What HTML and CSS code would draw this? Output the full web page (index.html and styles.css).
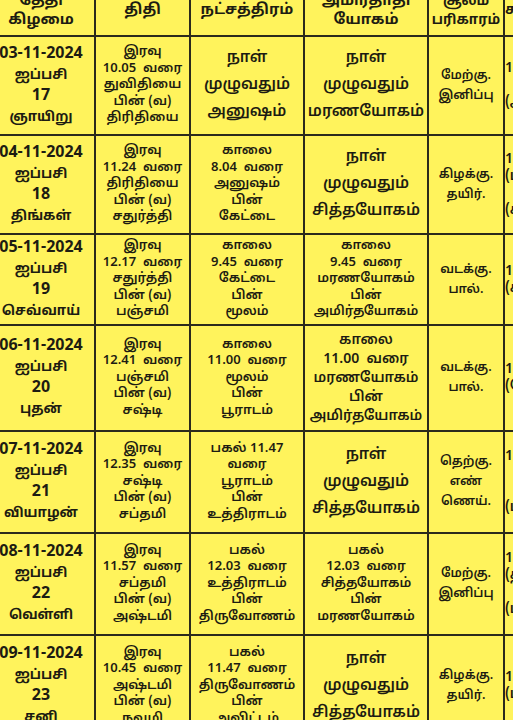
FILE: index.html
```html
<!DOCTYPE html>
<html lang="ta">
<head>
<meta charset="utf-8">
<title>பஞ்சாங்கம்</title>
<link rel="stylesheet" href="styles.css">
</head>
<body>
<div class="page">
<table class="cal">
<colgroup>
<col class="c1"><col class="c2"><col class="c3"><col class="c4"><col class="c5"><col class="c6">
</colgroup>
<thead>
<tr class="head">
<th>தேதி<br>கிழமை</th>
<th>திதி</th>
<th>நட்சத்திரம்</th>
<th>அமிர்தாதி<br>யோகம்</th>
<th class="hs">சூலம்<br>பரிகாரம்</th>
<th class="last">சந்திராஷ்டமம்</th>
</tr>
</thead>
<tbody>
<tr class="r1">
<td class="date">03-11-2024<br><span class="tm">ஐப்பசி</span><br>17<br><span class="tm">ஞாயிறு</span></td>
<td class="tt">இரவு<br>10.05&nbsp; வரை<br>துவிதியை<br>பின் (வ)<br>திரிதியை</td>
<td class="big">நாள்<br>முழுவதும்<br>அனுஷம்</td>
<td class="big">நாள்<br>முழுவதும்<br>மரணயோகம்</td>
<td class="sm">மேற்கு.<br>இனிப்பு</td>
<td class="last">10.06 வரை<br><br>(அஸ்வினி)</td>
</tr>
<tr class="r2">
<td class="date">04-11-2024<br><span class="tm">ஐப்பசி</span><br>18<br><span class="tm">திங்கள்</span></td>
<td class="tt">இரவு<br>11.24&nbsp; வரை<br>திரிதியை<br>பின் (வ)<br>சதுர்த்தி</td>
<td class="tt">காலை<br>8.04&nbsp; வரை<br>அனுஷம்<br>பின்<br>கேட்டை</td>
<td class="big">நாள்<br>முழுவதும்<br>சித்தயோகம்</td>
<td class="sm">கிழக்கு.<br>தயிர்.</td>
<td class="last">1.04 வரை<br>(பரணி)<br><br>(கிருத்திகை)</td>
</tr>
<tr class="r3">
<td class="date">05-11-2024<br><span class="tm">ஐப்பசி</span><br>19<br><span class="tm">செவ்வாய்</span></td>
<td class="tt">இரவு<br>12.17&nbsp; வரை<br>சதுர்த்தி<br>பின் (வ)<br>பஞ்சமி</td>
<td class="tt">காலை<br>9.45&nbsp; வரை<br>கேட்டை<br>பின்<br>மூலம்</td>
<td class="tt">காலை<br>9.45&nbsp; வரை<br>மரணயோகம்<br>பின்<br>அமிர்தயோகம்</td>
<td class="sm">வடக்கு.<br>பால்.</td>
<td class="last">12.10<br>(கிருத்திகை)</td>
</tr>
<tr class="r4">
<td class="date">06-11-2024<br><span class="tm">ஐப்பசி</span><br>20<br><span class="tm">புதன்</span></td>
<td class="tt">இரவு<br>12.41&nbsp; வரை<br>பஞ்சமி<br>பின் (வ)<br>சஷ்டி</td>
<td class="tt">காலை<br>11.00&nbsp; வரை<br>மூலம்<br>பின்<br>பூராடம்</td>
<td class="mid">காலை<br>11.00&nbsp; வரை<br>மரணயோகம்<br>பின்<br>அமிர்தயோகம்</td>
<td class="sm">வடக்கு.<br>பால்.</td>
<td class="last">1.10 வரை<br>(ரோகிணி)</td>
</tr>
<tr class="r5">
<td class="date">07-11-2024<br><span class="tm">ஐப்பசி</span><br>21<br><span class="tm">வியாழன்</span></td>
<td class="tt">இரவு<br>12.35&nbsp; வரை<br>சஷ்டி<br>பின் (வ)<br>சப்தமி</td>
<td class="tt">பகல் 11.47<br>வரை<br>பூராடம்<br>பின்<br>உத்திராடம்</td>
<td class="big">நாள்<br>முழுவதும்<br>சித்தயோகம்</td>
<td class="sm">தெற்கு.<br>எண்<br>ணெய்.</td>
<td class="last">12.03 வரை<br><br><br>(மிருகசீரிடம்)</td>
</tr>
<tr class="r6">
<td class="date">08-11-2024<br><span class="tm">ஐப்பசி</span><br>22<br><span class="tm">வெள்ளி</span></td>
<td class="tt">இரவு<br>11.57&nbsp; வரை<br>சப்தமி<br>பின் (வ)<br>அஷ்டமி</td>
<td class="tt">பகல்<br>12.03&nbsp; வரை<br>உத்திராடம்<br>பின்<br>திருவோணம்</td>
<td class="tt">பகல்<br>12.03&nbsp; வரை<br>சித்தயோகம்<br>பின்<br>மரணயோகம்</td>
<td class="sm">மேற்கு.<br>இனிப்பு</td>
<td class="last">11.47 வரை<br>(திருவாதிரை)<br><br>(புனர்பூசம்)</td>
</tr>
<tr class="r7">
<td class="date">09-11-2024<br><span class="tm">ஐப்பசி</span><br>23<br><span class="tm">சனி</span></td>
<td class="tt">இரவு<br>10.45&nbsp; வரை<br>அஷ்டமி<br>பின் (வ)<br>நவமி</td>
<td class="tt">பகல்<br>11.47&nbsp; வரை<br>திருவோணம்<br>பின்<br>அவிட்டம்</td>
<td class="big">நாள்<br>முழுவதும்<br>சித்தயோகம்</td>
<td class="sm">கிழக்கு.<br>தயிர்.</td>
<td class="last">10.40 வரை<br>(புனர்பூசம்)</td>
</tr>
</tbody>
</table>
</div>
</body>
</html>
```
FILE: styles.css
```css
html, body {
  margin: 0;
  padding: 0;
  background: #fff35c;
}
.page {
  width: 513px;
  height: 720px;
  overflow: hidden;
  background: #fff35c;
}
.cal {
  border-collapse: collapse;
  table-layout: fixed;
  width: 620px;
  margin-left: -14px;
  margin-top: -16px;
  font-family: "Noto Sans Tamil", "Liberation Sans", sans-serif;
  font-weight: 600;
  color: #1d1c12;
}
.c1 { width: 108px; }
.c2 { width: 95px; }
.c3 { width: 114px; }
.c4 { width: 124px; }
.c5 { width: 76px; }
.c6 { width: 103px; }
.cal th, .cal td {
  border: 2px solid #2b2a1c;
  text-align: center;
  vertical-align: middle;
  padding: 0 2px;
  white-space: nowrap;
  overflow: hidden;
}
.cal th {
  font-size: 15px;
  line-height: 19px;
  font-weight: 700;
}
.cal th.hs {
  font-size: 13.5px;
}
.head { height: 51px; }
.r1 { height: 99px; }
.r2 { height: 99px; }
.r3 { height: 91px; }
.r4 { height: 106px; }
.r5 { height: 102px; }
.r6 { height: 102px; }
.r7 { height: 102px; }
.date {
  font-size: 16px;
  line-height: 21px;
  font-weight: 700;
}
.date .tm {
  font-size: 13.5px;
}
.tt {
  font-size: 13px;
  line-height: 16.5px;
}
.big {
  font-size: 15.5px;
  line-height: 27px;
}
.mid {
  font-size: 14px;
  line-height: 19px;
}
.sm {
  font-size: 12.5px;
  line-height: 20px;
}
.cal th.last, .cal td.last {
  text-align: left;
  padding-left: 0;
  font-size: 14px;
  line-height: 17px;
}
```
